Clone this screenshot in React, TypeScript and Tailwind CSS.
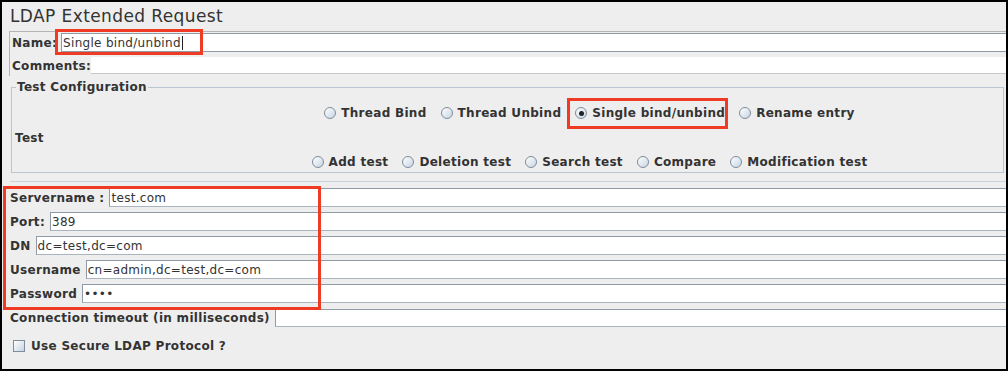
import React from "react";

const text = "text-[12px] tracking-[0.3px] text-[#333333]";

function Radio({ label, checked }: { label: string; checked?: boolean }) {
  return (
    <div className="flex items-center gap-[5px]">
      <span className="flex size-[12px] items-center justify-center rounded-full border border-[#7f8c99] bg-linear-to-br from-white to-[#c6d5e4]">
        {checked && <span className="size-[5px] rounded-full bg-[#222222]" />}
      </span>
      <span className={`${text} font-bold`}>{label}</span>
    </div>
  );
}

function FieldRow({ label, value, top = 5 }: { label: string; value: string; top?: number }) {
  return (
    <div className={`${top === 6 ? "mt-[6px]" : "mt-[5px]"} flex h-[19px] items-center pl-[8px]`}>
      <span className={`${text} mr-[5px] font-bold whitespace-nowrap`}>{label}</span>
      <div className={`${text} flex h-full flex-1 items-center border border-r-0 border-[#8e9aa7] border-b-[#aab4be] bg-white pl-[1px]`}>
        {value}
      </div>
    </div>
  );
}

export default function App() {
  const row1 = ["Thread Bind", "Thread Unbind", "Single bind/unbind", "Rename entry"];
  const row2 = ["Add test", "Deletion test", "Search test", "Compare", "Modification test"];

  return (
    <div className="relative h-[371px] w-[1008px] overflow-hidden border-2 border-black bg-[#eeeeee] font-['DejaVu_Sans',sans-serif]">
      {/* title */}
      <div className="flex h-[29px] items-center pl-[8px] text-[17px] tracking-[0.4px] text-[#333333]">LDAP Extended Request</div>

      {/* name / comments */}
      <div className="ml-[7px] h-[45px] border-t border-l border-[#b4b4b4]">
        <div className="mt-[1px] flex h-[19px] items-center pl-[2px]">
          <span className={`${text} mr-[4px] font-bold`}>Name:</span>
          <div className={`${text} flex h-full flex-1 items-center border border-r-0 border-[#8e9aa7] bg-white pl-[1px]`}>
            Single bind/unbind
            <span className="ml-[1px] h-[14px] w-px bg-[#222222]" />
          </div>
        </div>
        <div className="mt-[5px] flex h-[17px] items-center pl-[2px]">
          <span className={`${text} font-bold`}>Comments:</span>
          <div className="h-full flex-1 border-b border-[#c8c8c8] bg-white" />
        </div>
      </div>

      {/* test configuration */}
      <div className="mt-[11px] ml-[9px] mr-[2px] h-[86px] border border-[#b8c6d4]">
        <div className={`${text} -mt-[9px] ml-[4px] h-[16px] w-fit bg-[#eeeeee] px-[1px] leading-[16px] font-bold`}>
          Test Configuration
        </div>
        <div className="mt-[8px] flex h-[20px] items-center justify-center gap-x-[14px] pl-[164px]">
          {row1.map((l) => (
            <Radio key={l} label={l} checked={l === "Single bind/unbind"} />
          ))}
        </div>
        <div className={`${text} mt-[5px] flex h-[20px] items-center pl-[3px] font-bold`}>Test</div>
        <div className="mt-[4px] flex h-[20px] items-center justify-center gap-x-[14px] pl-[164px]">
          {row2.map((l) => (
            <Radio key={l} label={l} />
          ))}
        </div>
      </div>

      <div className="mt-[8px] ml-[8px] h-px bg-[#c8d3de]" />

      {/* connection fields */}
      <FieldRow label="Servername :" value="test.com" top={6} />
      <FieldRow label="Port:" value="389" />
      <FieldRow label="DN" value="dc=test,dc=com" />
      <FieldRow label="Username" value="cn=admin,dc=test,dc=com" />
      <FieldRow label="Password" value="••••" />

      <div className="mt-[6px] flex h-[18px] items-center pl-[8px]">
        <span className={`${text} mr-[5px] font-bold whitespace-nowrap`}>Connection timeout (in milliseconds)</span>
        <div className="h-full flex-1 border border-r-0 border-[#8e9aa7] border-b-[#aab4be] bg-white" />
      </div>

      <div className="mt-[13px] flex h-[12px] items-center gap-[6px] pl-[11px]">
        <span className="size-[12px] border border-[#7f8c99] bg-linear-to-br from-white to-[#c6d5e4]" />
        <span className={`${text} font-bold`}>Use Secure LDAP Protocol ?</span>
      </div>

      {/* red annotation frames */}
      <div className="absolute top-[27px] left-[53px] h-[26px] w-[148px] border-[3px] border-[#ef3b23]" />
      <div className="absolute top-[96px] left-[565px] h-[31px] w-[161px] border-[3px] border-[#ef3b23]" />
      <div className="absolute top-[184px] left-[1px] h-[124px] w-[318px] border-[3px] border-[#ef3b23]" />
    </div>
  );
}
